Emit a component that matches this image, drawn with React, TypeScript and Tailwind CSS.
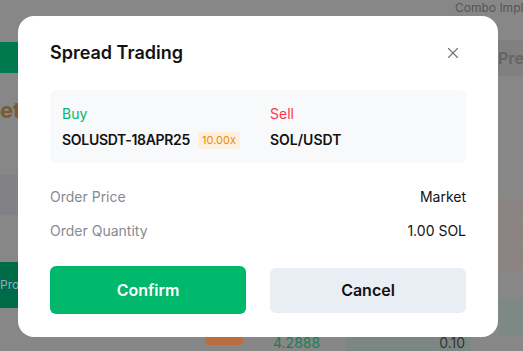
import { X } from 'lucide-react';

const font = { fontFamily: 'Inter, "Noto Sans", sans-serif' };

const Background = () => (
  <div className="flex h-[351px] w-full bg-[#878787] text-[#555]">
    {/* left strip */}
    <div className="flex w-[18px] flex-col">
      <div className="h-[42px]" />
      <div className="h-[31px] bg-[#00794f]" />
      <div className="mt-[22px] text-[22px] font-bold leading-[30px] text-[#7a5a33]">et</div>
      <div className="mt-[50px] h-[40px] bg-[#808085]" />
      <div className="mt-[47px] flex h-[46px] items-center bg-[#006b48] text-[12px] text-[#9ab]">Prot</div>
    </div>
    {/* middle */}
    <div className="flex flex-1 flex-col justify-end">
      <div className="flex h-[14px] items-start pl-[187px]">
        <div className="h-[8px] w-[38px] rounded-b bg-[#b86e3f]" />
        <div className="ml-[30px] text-[14px] leading-[12px] text-[#1b7d55]">4.2888</div>
        <div className="ml-[26px] flex h-[14px] w-[125px] items-start justify-end bg-[#7c8783] pr-[6px] text-[14px] leading-[12px] text-[#333]">0.10</div>
      </div>
    </div>
    {/* right strip */}
    <div className="flex w-[25px] flex-col">
      <div className="h-[16px] overflow-hidden whitespace-nowrap text-[12px] leading-[16px] text-[#555]" style={{ marginLeft: -43 }}>Combo Impli</div>
      <div className="mt-[24px] flex h-[36px] items-center bg-[#808080] text-[16px] font-bold text-[#666]">Pre</div>
      <div className="mt-[122px] h-[23px] bg-[#8c8383]" />
      <div className="mt-[2px] h-[23px] bg-[#8c8383]" />
      <div className="mt-[2px] h-[23px] bg-[#8c8383]" />
      <div className="mt-[28px] h-[37px] bg-[#7e8884]" />
    </div>
  </div>
);

export default function App() {
  return (
    <div className="relative h-[351px] w-[523px] overflow-hidden" style={font}>
      <Background />
      <div className="absolute left-[18px] top-[16px] w-[480px] rounded-[16px] bg-white px-[32px] pb-[23px] pt-[24px]">
        <div className="flex items-center justify-between">
          <h2 className="text-[18px] font-semibold leading-[26px] text-[#121212]">Spread Trading</h2>
          <X size={18} strokeWidth={1.5} className="mr-[4px] text-[#6b6f76]" />
        </div>
        <div className="mt-[24px] grid grid-cols-[208px_1fr] rounded-[6px] bg-[#f8f9fb] px-[12px] pb-[13px] pt-[14px]">
          <div>
            <div className="text-[14px] leading-[20px] text-[#00b86b]">Buy</div>
            <div className="mt-[6px] flex items-center gap-[8px]">
              <span className="text-[14px] font-semibold leading-[20px] tracking-[-0.3px] text-[#121212]">SOLUSDT-18APR25</span>
              <span className="rounded-[3px] bg-[#fdf0df] px-[4px] text-[11px] leading-[17px] text-[#f08c00]">10.00x</span>
            </div>
          </div>
          <div>
            <div className="text-[14px] leading-[20px] text-[#f5374a]">Sell</div>
            <div className="mt-[6px] text-[14px] font-semibold leading-[20px] text-[#121212]">SOL/USDT</div>
          </div>
        </div>
        <div className="mt-[24px] flex items-center justify-between text-[14px] leading-[20px]">
          <span className="text-[#868a93]">Order Price</span>
          <span className="text-[#121212]">Market</span>
        </div>
        <div className="mt-[14px] flex items-center justify-between text-[14px] leading-[20px]">
          <span className="text-[#868a93]">Order Quantity</span>
          <span className="text-[#121212]">1.00 SOL</span>
        </div>
        <div className="mt-[25px] flex items-center gap-[24px]">
          <button className="h-[48px] flex-1 rounded-[6px] bg-[#00b86b] text-[16px] font-semibold text-white">Confirm</button>
          <button className="h-[45px] flex-1 rounded-[6px] bg-[#e9edf4] text-[16px] font-semibold text-[#121212]">Cancel</button>
        </div>
      </div>
    </div>
  );
}
